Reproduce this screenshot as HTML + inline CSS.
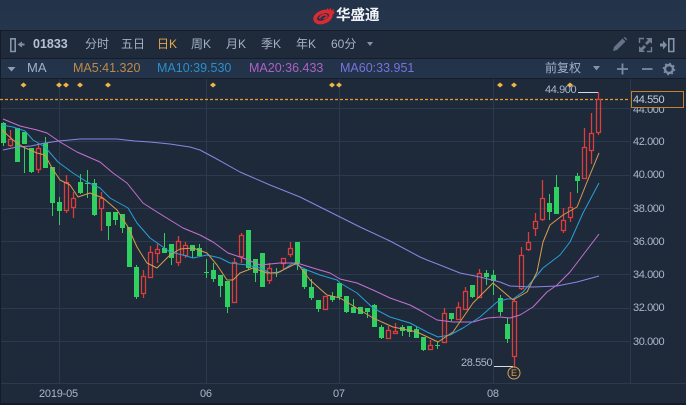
<!DOCTYPE html>
<html><head><meta charset="utf-8">
<style>
html,body{margin:0;padding:0;background:#1e2a3a}
#p{position:relative;width:686px;height:405px;overflow:hidden;background:#1e2a3a;font-family:"Liberation Sans","Noto Sans CJK SC",sans-serif;filter:blur(.3px)}
.b{position:absolute;left:0;width:686px}
.t{position:absolute;white-space:nowrap;line-height:16px;font-size:12px;color:#a3b2c6}
.m{font-size:12.5px;top:60px}
.a{font-size:11px;letter-spacing:-.4px;left:633px;color:#a9b8cc}
svg{position:absolute;left:0;top:0}
</style></head><body><div id="p">
<div class="b" style="top:0;height:30px;background:linear-gradient(#22334a,#25354c)"></div>
<div class="b" style="top:30px;height:1px;background:#131c28"></div>
<div class="b" style="top:31px;height:27px;background:#1f2b3b"></div>
<div class="b" style="top:58px;height:1px;background:#141d29"></div>
<div class="b" style="top:59px;height:19px;background:#233349"></div>
<div class="b" style="top:78px;height:1px;background:#141d29"></div>
<div class="b" style="top:403px;height:2px;background:#131c28"></div>
<svg width="686" height="405" viewBox="0 0 686 405" shape-rendering="crispEdges">
<path d="M59.5 79V383M206.5 79V383M339.5 79V383M493.5 79V383M630.5 79V383M0 108.5H630M0 141.5H630M0 175.500H630M0 208.500H630M0 241.500H630M0 274.500H630M0 308.500H630M0 341.500H630M0 383.500H686" stroke="#2b3a4f" fill="none"/>
<path d="M0.5 31V403" stroke="#131c28"/>
<path d="M0 99.500H630" stroke="#e09a3a" stroke-width="1.300" stroke-dasharray="3 2" shape-rendering="geometricPrecision"/>
<path d="M578 92.500H598M494 366.500H513" stroke="#d5dce6"/>
<g fill="#2fcf60" stroke="none">
<path d="M3 122h1v24h-1zM24 148h1v25h-1zM31 148h1v25h-1zM45 137h1v31h-1zM52 167h1v49h-1zM59 197h1v28h-1zM80 174h1v20h-1zM87 170h1v28h-1zM94 179h1v37h-1zM108 212h1v28h-1zM115 212h1v13h-1zM122 214h1v19h-1zM136 265h1v34h-1zM164 233h1v20h-1zM171 244h1v21h-1zM192 245h1v13h-1zM199 244h1v12h-1zM206 259h1v19h-1zM213 263h1v19h-1zM220 275h1v22h-1zM227 281h1v32h-1zM248 230h1v40h-1zM255 259h1v23h-1zM276 268h1v9h-1zM297 242h1v28h-1zM304 269h1v20h-1zM311 279h1v21h-1zM318 300h1v12h-1zM332 292h1v10h-1zM339 283h1v17h-1zM346 296h1v17h-1zM353 299h1v14h-1zM367 308h1v10h-1zM374 304h1v23h-1zM381 325h1v14h-1zM402 325h1v11h-1zM409 326h1v11h-1zM416 327h1v11h-1zM423 337h1v14h-1zM437 342h1v7h-1zM451 313h1v8h-1zM472 285h1v13h-1zM486 270h1v15h-1zM493 270h1v25h-1zM500 295h1v21h-1zM507 318h1v25h-1zM549 194h1v26h-1zM556 175h1v39h-1zM577 173h1v20h-1z"/>
<path d="M1 123h5v20h-5zM15 128h5v34h-5zM22 132h5v12h-5zM29 148h5v24h-5zM43 143h5v25h-5zM50 167h5v36h-5zM57 202h5v9h-5zM78 182h5v11h-5zM85 183h5v1h-5zM92 183h5v32h-5zM106 212h5v14h-5zM113 212h5v8h-5zM120 214h5v14h-5zM127 227h5v40h-5zM134 267h5v30h-5zM162 248h5v5h-5zM169 244h5v14h-5zM190 245h5v6h-5zM197 248h5v8h-5zM204 272h5v1h-5zM211 270h5v9h-5zM218 275h5v11h-5zM225 281h5v26h-5zM246 230h5v38h-5zM253 259h5v14h-5zM260 253h5v34h-5zM274 272h5v1h-5zM295 242h5v21h-5zM302 269h5v18h-5zM309 287h5v11h-5zM316 300h5v9h-5zM330 296h5v4h-5zM337 283h5v14h-5zM344 296h5v16h-5zM351 307h5v6h-5zM358 307h5v7h-5zM365 308h5v4h-5zM372 305h5v22h-5zM379 327h5v11h-5zM400 327h5v4h-5zM407 326h5v6h-5zM414 329h5v9h-5zM421 337h5v13h-5zM435 345h5v1h-5zM449 313h5v6h-5zM470 285h5v12h-5zM484 273h5v4h-5zM491 275h5v6h-5zM498 298h5v14h-5zM505 324h5v15h-5zM547 203h5v9h-5zM554 187h5v27h-5zM575 176h5v5h-5z"/>
</g>
<g fill="none" stroke="#e03c3c" stroke-width="1.250" shape-rendering="geometricPrecision">
<path d="M10.500 130V139M10.500 145V147M38.500 143V148M38.500 169V173M66.500 175V182M66.500 210V213M73.500 192V198M73.500 207V218M101.500 192V198M101.500 208V231M143.500 270V276M143.500 293V298M150.500 246V252M157.500 244V249M157.500 253V263M178.500 236V241M178.500 262V266M185.500 242V245M185.500 255V258M234.500 258V262M241.500 233V235M241.500 256V263M269.500 263V268M269.500 280V284M283.500 263V269M290.500 242V248M290.500 254V257M388.500 326V330M395.500 323V331M430.500 340V345M444.500 308V313M444.500 342V343M458.500 302V307M465.500 287V291M465.500 309V310M479.500 269V273M514.500 299V301M514.500 356V367M521.500 247V255M521.500 288V290M528.500 232V242M528.500 249V251M535.500 213V221M535.500 228V236M542.500 180V198M542.500 219V221M563.500 208V220M563.500 230V233M570.500 192V207M570.500 217V222M584.500 128V147M591.500 113V133M591.500 150V164M598.500 92V99M598.500 132V135"/>
<path d="M8.500 139.500h4v6h-4zM36.500 148.500h4v21h-4zM64.500 182.500h4v28h-4zM71.500 198.500h4v9h-4zM99.500 198.500h4v10h-4zM141.500 276.500h4v17h-4zM148.500 252.500h4v25h-4zM155.500 249.500h4v4h-4zM176.500 241.500h4v21h-4zM183.500 245.500h4v10h-4zM232.500 262.500h4v40h-4zM239.500 235.500h4v21h-4zM267.500 268.500h4v12h-4zM281.500 258.500h4v5h-4zM288.500 248.500h4v6h-4zM323.500 296.500h4v13h-4zM386.500 330.500h4v8h-4zM393.500 331.500h4v2h-4zM428.500 345.500h4v4h-4zM442.500 313.500h4v29h-4zM456.500 307.500h4v12h-4zM463.500 291.500h4v18h-4zM477.500 273.500h4v24h-4zM512.500 301.500h4v55h-4zM519.500 255.500h4v33h-4zM526.500 242.500h4v7h-4zM533.500 221.500h4v7h-4zM540.500 198.500h4v21h-4zM561.500 220.500h4v10h-4zM568.500 207.500h4v10h-4zM582.500 147.500h4v31h-4zM589.500 133.500h4v17h-4zM596.500 99.500h4v33h-4z"/>
</g>
<g fill="none" stroke-width="1" shape-rendering="geometricPrecision" stroke-linejoin="round">
<polyline stroke="#8b86e2" points="3,150 17,147 31,146 45,143 59,141 80,139 100,139 117,139 135,141 150,142 170,144 190,147 200,150 215,158 240,172 270,185 300,197 330,212 360,227 390,241 420,257 427,260 440,265 460,273 480,277 500,282 510,286 533,287 557,286 577,282 599,276"/>
<polyline stroke="#c670d2" points="3,119 20,126 37,130 47,133 60,142 77,152 100,162 113,173 127,183 143,203 157,212 170,220 183,228 200,235 213,242 228,253 243,258 260,265 280,263 297,263 313,268 330,273 340,279 357,283 373,290 390,298 410,305 423,312 437,320 453,322 473,322 487,318 500,317 510,318 520,315 533,307 547,292 557,285 570,272 583,255 599,234"/>
<polyline stroke="#2a9fd8" points="2,125 13,127 25,131 33,140 45,147 58,162 73,173 87,182 100,188 110,198 128,208 137,223 150,238 163,247 170,252 183,255 193,258 207,255 220,258 230,263 247,265 260,268 270,273 280,272 293,263 307,270 320,275 337,280 340,283 357,293 373,308 390,317 410,323 427,332 438,337 450,335 463,328 480,317 497,302 507,299 513,299 523,292 543,268 560,255 570,242 583,213 599,183"/>
<polyline stroke="#d99b4c" points="2,130 13,140 23,147 37,153 45,155 52,168 60,180 70,185 78,197 90,193 103,198 117,210 128,227 137,247 147,263 157,268 170,255 180,249 193,248 207,253 217,265 227,280 233,280 240,273 253,268 267,273 277,273 297,263 310,280 327,295 340,298 360,310 373,318 393,327 417,332 438,342 453,332 473,303 493,283 513,300 527,292 537,272 543,242 550,225 563,215 577,207 587,182 599,153"/>
</g>
<g fill="#f2b445" shape-rendering="geometricPrecision">
<path d="M23.500 82.500l3 2.500-3 2.500-3-2.500zM59 82.500l3 2.500-3 2.500-3-2.500zM66 82.500l3 2.500-3 2.500-3-2.500zM80 82.500l3 2.500-3 2.500-3-2.500zM108 82.500l3 2.500-3 2.500-3-2.500zM213 82.500l3 2.500-3 2.500-3-2.500zM332 82.500l3 2.500-3 2.500-3-2.500zM339 82.500l3 2.500-3 2.500-3-2.500zM500 82.500l3 2.500-3 2.500-3-2.500zM514 82.500l3 2.500-3 2.500-3-2.500zM570 82.500l3 2.500-3 2.500-3-2.500z"/>
</g>
<g shape-rendering="geometricPrecision">
<circle cx="514" cy="373" r="6" fill="#1e2a3a" stroke="#d9a04a"/>
<path d="M367 42h6l-3 4zM593 66h7l-3.500 4.500z" fill="#8393a8"/>
<path d="M7.500 67h8l-4 4.500z" fill="#8d9db2"/>
<path d="M22 41.500v6l-4.500-3z" fill="#7e8da2"/><path d="M21 43.500h3.500v2h-3.500z" fill="#7e8da2"/>
<path d="M10.800 38.800h4.400v12.700h-4.400z" fill="none" stroke="#8494a9" stroke-width="1.600"/>
<path d="M613 51l1-4 8.500-8.500 3 3-8.500 8.500zM623.500 37.500l1.500-.5 2 2-.5 1.500z" fill="#64738a"/>
<path d="M639.500 43v-4.500h4.500M651.500 47v4.500h-4.500" fill="none" stroke="#6f7e93" stroke-width="1.400"/>
<path d="M652 38v6l-2-2-3 3-2-2 3-3-2-2zM639 52v-6l2 2 3-3 2 2-3 3 2 2z" fill="#6f7e93"/>
<path d="M660 43.500h3v-3l4 4.500-4 4.500v-3h-3z" fill="#7e8da2"/>
<path d="M668.800 38.800h4.900v12.700h-4.900z" fill="none" stroke="#8494a9" stroke-width="1.600"/>
<path d="M617 69h11M622.500 63.500v11M642 69h10.500" stroke="#7d8ca0" stroke-width="1.800"/>
<circle cx="669" cy="69" r="4" fill="none" stroke="#7d8ca0" stroke-width="2.400"/>
<circle cx="669" cy="69" r="5.600" fill="none" stroke="#7d8ca0" stroke-width="1.400" stroke-dasharray="1.800 2.600"/>
<path d="M326 11l2-3.500 .5 3 2.500-3 .2 3.200 3-2-1 3.300 2-.5-2 3z" fill="#dc2a30"/>
<ellipse cx="323" cy="17" rx="8.300" ry="5" transform="rotate(-22 323 17)" fill="none" stroke="#dc2a30" stroke-width="3.600"/>
<path d="M319.500 18.500c1-3 5-4.500 7-3.200 1.200 1-.5 3-3 3.400" fill="none" stroke="#dc2a30" stroke-width="1.600"/>
</g>
</svg>
<div class="t" style="left:336px;top:8px;font-size:14.500px;font-weight:bold;color:#f0f3f7;letter-spacing:0">华盛通</div>
<div class="t" style="left:33px;top:36px;font-weight:bold;color:#b4c2d4;font-size:12.500px">01833</div>
<div class="t" style="left:85px;top:36px">分时</div>
<div class="t" style="left:121px;top:36px">五日</div>
<div class="t" style="left:157px;top:36px;color:#e8a94e">日K</div>
<div class="t" style="left:191px;top:36px">周K</div>
<div class="t" style="left:226px;top:36px">月K</div>
<div class="t" style="left:261px;top:36px">季K</div>
<div class="t" style="left:296px;top:36px">年K</div>
<div class="t" style="left:331px;top:36px">60分</div>
<div class="t" style="left:27px;top:60px;font-size:13px;color:#9fb0c5">MA</div>
<div class="t m" style="left:73px;color:#c08a45">MA5:41.320</div>
<div class="t m" style="left:157px;color:#2a8fca">MA10:39.530</div>
<div class="t m" style="left:249px;color:#b060c4">MA20:36.433</div>
<div class="t m" style="left:340px;color:#7a72dc">MA60:33.951</div>
<div class="t" style="left:545px;top:60px">前复权</div>
<div class="t" style="left:545px;top:82px;font-size:11px;letter-spacing:-.4px;color:#a9b8cc">44.900</div>
<div class="t" style="left:461px;top:355px;font-size:11px;letter-spacing:-.4px;color:#a9b8cc">28.550</div>
<div class="t" style="left:511px;top:365px;font-size:9px;color:#d9a04a">E</div>
<div class="t a" style="top:102px">44.000</div>
<div class="t a" style="top:134px">42.000</div>
<div class="t a" style="top:167px">40.000</div>
<div class="t a" style="top:201px">38.000</div>
<div class="t a" style="top:234px">36.000</div>
<div class="t a" style="top:267px">34.000</div>
<div class="t a" style="top:300px">32.000</div>
<div class="t a" style="top:334px">30.000</div>
<div style="position:absolute;left:631px;top:91px;width:51px;height:15px;border:1px solid #c9802c;background:#1e2a3a"></div>
<div class="t a" style="top:92px;color:#c3cedc">44.550</div>
<div class="t" style="left:39px;top:386px;font-size:11px;letter-spacing:-.2px;color:#a9b8cc">2019-05</div>
<div class="t" style="left:200px;top:386px;font-size:11px;letter-spacing:-.2px;color:#a9b8cc">06</div>
<div class="t" style="left:333px;top:386px;font-size:11px;letter-spacing:-.2px;color:#a9b8cc">07</div>
<div class="t" style="left:487px;top:386px;font-size:11px;letter-spacing:-.2px;color:#a9b8cc">08</div>
</div></body></html>
